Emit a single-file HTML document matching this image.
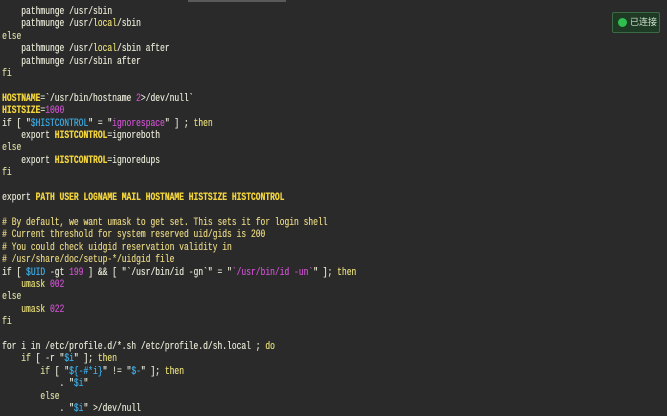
<!DOCTYPE html>
<html><head><meta charset="utf-8"><style>
html,body{margin:0;padding:0;width:667px;height:416px;overflow:hidden;background:#2a2a2a;}
#code{position:absolute;left:2px;top:6px;transform:scaleX(0.725);transform-origin:0 0;font-family:"Liberation Mono",monospace;font-size:11px;line-height:12.4px;color:#dedece;white-space:pre;text-shadow:0.3px 0 0 currentColor;}
.k{color:#dcd372}.v{color:#f0d23c;font-weight:bold}.m{color:#c24fc4}.c{color:#3aa7de}.cm{color:#dccc7c}.e{color:#d2d29c}
#badge{position:absolute;left:612px;top:12px;width:48px;height:21px;background:#1e3a24;border:1px solid #3c6a45;border-radius:2px;box-sizing:border-box;font-family:"Liberation Sans","Noto Sans CJK SC",sans-serif;font-size:9px;color:#d0e0d0;line-height:19px;white-space:nowrap;}
#badge .d{position:absolute;left:5px;top:5px;width:9px;height:9px;border-radius:50%;background:#2fbf4f;}
#badge span{position:absolute;left:17px;top:0;}
#bar{position:absolute;left:188px;top:0;width:98px;height:2px;background:#5a5a5a;}
</style></head><body>
<div id="bar"></div>
<div id="code">    pathmunge /usr/sbin
    pathmunge /usr/<span class="k">local</span>/sbin
<span class="e">else</span>
    pathmunge /usr/<span class="k">local</span>/sbin after
    pathmunge /usr/sbin after
<span class="e">fi</span>

<span class="v">HOSTNAME</span>=`/usr/bin/hostname <span class="m">2</span>&gt;/dev/null`
<span class="v">HISTSIZE</span>=<span class="m">1000</span>
if [ "<span class="c">$HISTCONTROL</span>" = "<span class="m">ignorespace</span>" ] ; <span class="k">then</span>
    export <span class="v">HISTCONTROL</span>=ignoreboth
<span class="e">else</span>
    export <span class="v">HISTCONTROL</span>=ignoredups
<span class="e">fi</span>

export <span class="v">PATH USER LOGNAME MAIL HOSTNAME HISTSIZE HISTCONTROL</span>

<span class="cm"># By default, we want umask to get set. This sets it for login shell</span>
<span class="cm"># Current threshold for system reserved uid/gids is 200</span>
<span class="cm"># You could check uidgid reservation validity in</span>
<span class="cm"># /usr/share/doc/setup-*/uidgid file</span>
if [ <span class="c">$UID</span> -gt <span class="m">199</span> ] &amp;&amp; [ "`/usr/bin/id -gn`" = "<span class="m">`/usr/bin/id -un`</span>" ]; <span class="k">then</span>
    <span class="k">umask</span> <span class="m">002</span>
<span class="e">else</span>
    <span class="k">umask</span> <span class="m">022</span>
<span class="e">fi</span>

for i in /etc/profile.d/*.sh /etc/profile.d/sh.local ; <span class="k">do</span>
    <span class="e">if</span> [ -r "<span class="c">$i</span>" ]; <span class="k">then</span>
        <span class="e">if</span> [ "<span class="c">${-#*i}</span>" != "<span class="c">$-</span>" ]; <span class="k">then</span>
            . "<span class="c">$i</span>"
        <span class="e">else</span>
            . "<span class="c">$i</span>" &gt;/dev/null</div>
<div id="badge"><div class="d"></div><span>已连接</span></div>
</body></html>
